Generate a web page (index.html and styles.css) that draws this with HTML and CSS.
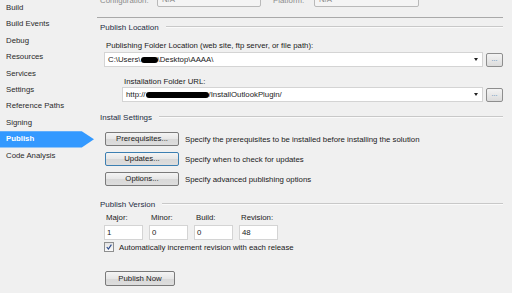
FILE: index.html
```html
<!DOCTYPE html>
<html lang="en">
<head>
    <meta charset="UTF-8">
    <title>Publish</title>
    <link rel="stylesheet" href="styles.css">
</head>
<body>
<section class="page">
    <ul class="tabs">
        <li>Build</li>
        <li>Build Events</li>
        <li>Debug</li>
        <li>Resources</li>
        <li>Services</li>
        <li>Settings</li>
        <li>Reference Paths</li>
        <li>Signing</li>
        <li class="active">Publish</li>
        <li>Code Analysis</li>
    </ul>
    <div class="main">
        <div class="topbar">
            <span class="top-label">Configuration:</span>
            <span class="top-combo">N/A<i class="arrow"></i></span>
            <span class="top-label plat">Platform:</span>
            <span class="top-combo small">N/A<i class="arrow"></i></span>
        </div>

        <div class="group-title">Publish Location</div>
        <div class="label first">Publishing Folder Location (web site, ftp server, or file path):</div>
        <div class="path-row">
            <div class="combo">C:\Users\<span class="blot b1"></span>\Desktop\AAAA\<i class="arrow"></i></div>
            <a href="javascript:;" class="browse">...</a>
        </div>
        <div class="label indent">Installation Folder URL:</div>
        <div class="path-row indent-row">
            <div class="combo">http://<span class="blot b2"></span>/InstallOutlookPlugin/<i class="arrow"></i></div>
            <a href="javascript:;" class="browse">...</a>
        </div>

        <div class="group-title gap">Install Settings</div>
        <div class="btn-row first-btn">
            <a href="javascript:;" class="btn">Prerequisites...</a>
            <span>Specify the prerequisites to be installed before installing the solution</span>
        </div>
        <div class="btn-row">
            <a href="javascript:;" class="btn focus">Updates...</a>
            <span>Specify when to check for updates</span>
        </div>
        <div class="btn-row">
            <a href="javascript:;" class="btn">Options...</a>
            <span>Specify advanced publishing options</span>
        </div>

        <div class="group-title gap2">Publish Version</div>
        <div class="version">
            <div class="field"><span>Major:</span><div class="box">1</div></div>
            <div class="field"><span>Minor:</span><div class="box">0</div></div>
            <div class="field"><span>Build:</span><div class="box">0</div></div>
            <div class="field"><span>Revision:</span><div class="box">48</div></div>
        </div>
        <div class="check-row">
            <span class="check">
                <svg width="9" height="9" viewBox="0 0 9 9"><path d="M2 4.5 L3.8 6.8 L7.2 1.8" fill="none" stroke="#2b4a8c" stroke-width="1.3"/></svg>
            </span>
            <span>Automatically increment revision with each release</span>
        </div>
        <a href="javascript:;" class="btn publish">Publish Now</a>
    </div>
</section>
</body>
</html>
```

FILE: styles.css
```css
html,body{ height:100%; }
body,ul{ margin:0; padding:0; }
body{
    background:#f0f0f0;
    font-family:"Liberation Sans", Arial, sans-serif;
    font-size:7.8px;
    color:#1a1a1a;
    overflow:hidden;
}
.page{ display:flex; height:100%; }

/* left tabs */
.tabs{ list-style:none; width:97px; flex:none; }
.tabs li{
    height:16.4px;
    line-height:16.4px;
    padding-left:6px;
    color:#2a2a2a;
    font-size:7.8px;
}
.tabs li.active{
    width:82px;
    padding-right:6px;
    background:#3399ff;
    color:#fff;
    font-weight:bold;
    clip-path:polygon(0 0, 87% 0, 100% 50%, 87% 100%, 0 100%);
}

/* main pane */
.main{ flex:1; padding-right:9px; }
.topbar{
    height:17px;
    border-bottom:1px solid #a9a9a9;
    display:flex;
    align-items:flex-start;
    color:#8a8a8a;
}
.top-label{ margin:-4px 0 0 3px; width:57px; }
.top-label.plat{ margin-left:12px; width:41px; }
.top-combo{
    position:relative;
    margin-top:-8px;
    width:98px;
    height:13px;
    line-height:13px;
    padding-left:4px;
    background:#f4f4f4;
    border:1px solid #b9b9b9;
    border-radius:2px;
}
.top-combo.small{ width:99px; }

.group-title{
    display:flex;
    align-items:center;
    height:12px;
    margin:3px 0 0 3px;
    color:#1e2e44;
    font-size:8px;
}
.group-title::after{
    content:"";
    flex:1;
    margin-left:7px;
    border-top:1px solid #c8c8c8;
    border-bottom:1px solid #fafafa;
}
.group-title.gap{ margin-top:9px; }
.group-title.gap2{ margin-top:12px; }

.label{ height:12px; line-height:12px; margin-left:9px; }
.label.first{ margin-top:7px; }
.label.indent{ margin:9px 0 0 27px; height:11px; }

.path-row{ display:flex; align-items:flex-start; margin-left:7px; }
.path-row.indent-row{ margin-left:25px; }
.combo{
    position:relative;
    flex:1;
    height:13px;
    line-height:13px;
    padding-left:3px;
    background:#fff;
    border:1px solid #d4d4d4;
    display:flex;
    align-items:center;
}
.arrow{
    position:absolute;
    right:4px;
    top:5px;
    width:0;
    height:0;
    border-left:2.5px solid transparent;
    border-right:2.5px solid transparent;
    border-top:3px solid #222;
}
.top-combo .arrow{ border-top-color:#999; top:4px; }
.blot{
    display:inline-block;
    height:6px;
    background:#000;
    border-radius:3px;
}
.b1{ width:17px; }
.b2{ width:63px; }

.browse{
    width:15px;
    height:12px;
    margin:1px 0 0 3px;
    border:1px solid #8e8e8e;
    border-radius:2px;
    background:linear-gradient(#f3f3f3,#dcdcdc);
    color:#3c7fb1;
    text-align:center;
    line-height:9px;
    font-size:7px;
    text-decoration:none;
}

.btn{
    display:inline-block;
    box-sizing:border-box;
    width:74px;
    height:14px;
    line-height:12px;
    border:1px solid #7a7a7a;
    border-radius:2px;
    background:linear-gradient(#f4f4f4,#e6e6e6 50%,#d8d8d8 51%,#dddddd);
    color:#1a1a1a;
    text-align:center;
    text-decoration:none;
}
.btn.focus{ border-color:#3c7fb1; }
.btn-row{
    display:flex;
    align-items:center;
    gap:6px;
    margin:6px 0 0 8px;
}
.btn-row.first-btn{ margin-top:9px; }

.version{ display:flex; gap:6px; margin:2px 0 0 7px; }
.field span{ display:block; height:12px; line-height:12px; margin-left:2px; }
.box{
    margin-top:1px;
    width:35px;
    height:13px;
    line-height:13px;
    padding-left:2px;
    background:#fff;
    border:1px solid #d4d4d4;
}
.check-row{
    display:flex;
    align-items:center;
    gap:5px;
    height:10px;
    margin:2px 0 0 7px;
}
.check{
    width:8px;
    height:8px;
    border:1px solid #8e8f8f;
    background:linear-gradient(#e4e4e4,#fafafa);
    display:flex;
    align-items:center;
    justify-content:center;
}
.check svg{ width:8px; height:8px; }
.btn.publish{
    width:70px;
    height:15px;
    line-height:13px;
    margin:19px 0 0 8px;
}
```
